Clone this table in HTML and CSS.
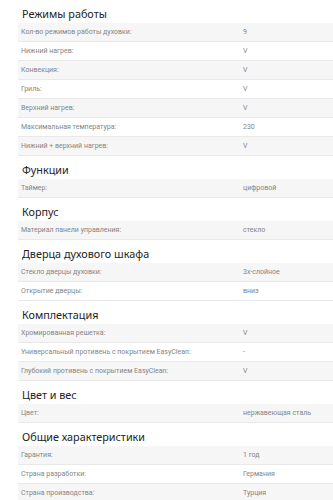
FILE: index.html
```html
<!DOCTYPE html>
<html lang="ru">
<head>
<meta charset="utf-8">
<link rel="stylesheet" href="styles.css">
</head>
<body>
<div class="specs">
  <section class="group">
    <h2 class="sec">Режимы работы</h2>
    <div class="row"><span class="k">Кол-во режимов работы духовки:</span><span class="v">9</span></div>
    <div class="row"><span class="k">Нижний нагрев:</span><span class="v">V</span></div>
    <div class="row"><span class="k">Конвекция:</span><span class="v">V</span></div>
    <div class="row"><span class="k">Гриль:</span><span class="v">V</span></div>
    <div class="row"><span class="k">Верхний нагрев:</span><span class="v">V</span></div>
    <div class="row"><span class="k">Максимальная температура:</span><span class="v">230</span></div>
    <div class="row"><span class="k">Нижний + верхний нагрев:</span><span class="v">V</span></div>
  </section>
  <section class="group">
    <h2 class="sec">Функции</h2>
    <div class="row"><span class="k">Таймер:</span><span class="v">цифровой</span></div>
  </section>
  <section class="group">
    <h2 class="sec">Корпус</h2>
    <div class="row"><span class="k">Материал панели управления:</span><span class="v">стекло</span></div>
  </section>
  <section class="group">
    <h2 class="sec">Дверца духового шкафа</h2>
    <div class="row"><span class="k">Стекло дверцы духовки:</span><span class="v">3х-слойное</span></div>
    <div class="row"><span class="k">Открытие дверцы:</span><span class="v">вниз</span></div>
  </section>
  <section class="group">
    <h2 class="sec">Комплектация</h2>
    <div class="row"><span class="k">Хромированная решетка:</span><span class="v">V</span></div>
    <div class="row"><span class="k">Универсальный противень с покрытием EasyClean:</span><span class="v">-</span></div>
    <div class="row"><span class="k">Глубокий противень с покрытием EasyClean:</span><span class="v">V</span></div>
  </section>
  <section class="group">
    <h2 class="sec">Цвет и вес</h2>
    <div class="row"><span class="k">Цвет:</span><span class="v">нержавеющая сталь</span></div>
  </section>
  <section class="group">
    <h2 class="sec">Общие характеристики</h2>
    <div class="row"><span class="k">Гарантия:</span><span class="v">1 год</span></div>
    <div class="row"><span class="k">Страна разработки:</span><span class="v">Германия</span></div>
    <div class="row"><span class="k">Страна производства:</span><span class="v">Турция</span></div>
  </section>
</div>
</body>
</html>
```
FILE: styles.css
```css
html, body {
  margin: 0;
  padding: 0;
  background: #fff;
}
.specs {
  padding-left: 18px;
}
.group {
  display: block;
}
.sec {
  margin: 0;
  height: 23px;
  box-sizing: border-box;
  padding: 6px 0 0 4px;
  font-family: "Noto Sans", sans-serif;
  font-weight: 400;
  font-size: 10.8px;
  line-height: 15px;
  color: #222;
}
.row {
  display: grid;
  grid-template-columns: 225px 1fr;
  height: 19px;
  box-sizing: border-box;
  border-bottom: 1px solid #e9e9e9;
  font-family: Roboto, "Liberation Sans", sans-serif;
  font-size: 7px;
  line-height: 18px;
  color: #858585;
  white-space: nowrap;
}
.row:nth-of-type(odd) {
  background: #f6f6f6;
}
.k {
  padding-left: 3px;
}
```
